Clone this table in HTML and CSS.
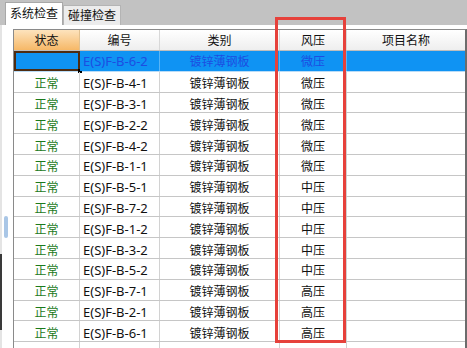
FILE: index.html
```html
<!DOCTYPE html>
<html lang="zh">
<head>
<meta charset="utf-8">
<link rel="stylesheet" href="styles.css">
</head>
<body>
<div class="tabbar">
  <div class="tab active">系统检查</div>
  <div class="tab">碰撞检查</div>
</div>
<div class="panel">
  <div class="grid">
    <div class="row head">
      <div class="cell c hsel">状态</div>
      <div class="cell c">编号</div>
      <div class="cell c">类别</div>
      <div class="cell c">风压</div>
      <div class="cell c">项目名称</div>
    </div>
    <div class="row sel">
      <div class="cell c focus"><span class="corner"></span></div>
      <div class="cell l">E(S)F-B-6-2</div>
      <div class="cell c">镀锌薄钢板</div>
      <div class="cell c">微压</div>
      <div class="cell c"></div>
    </div>
    <div class="row"><div class="cell c ok">正常</div><div class="cell l">E(S)F-B-4-1</div><div class="cell c">镀锌薄钢板</div><div class="cell c">微压</div><div class="cell c"></div></div>
    <div class="row"><div class="cell c ok">正常</div><div class="cell l">E(S)F-B-3-1</div><div class="cell c">镀锌薄钢板</div><div class="cell c">微压</div><div class="cell c"></div></div>
    <div class="row"><div class="cell c ok">正常</div><div class="cell l">E(S)F-B-2-2</div><div class="cell c">镀锌薄钢板</div><div class="cell c">微压</div><div class="cell c"></div></div>
    <div class="row"><div class="cell c ok">正常</div><div class="cell l">E(S)F-B-4-2</div><div class="cell c">镀锌薄钢板</div><div class="cell c">微压</div><div class="cell c"></div></div>
    <div class="row"><div class="cell c ok">正常</div><div class="cell l">E(S)F-B-1-1</div><div class="cell c">镀锌薄钢板</div><div class="cell c">微压</div><div class="cell c"></div></div>
    <div class="row"><div class="cell c ok">正常</div><div class="cell l">E(S)F-B-5-1</div><div class="cell c">镀锌薄钢板</div><div class="cell c">中压</div><div class="cell c"></div></div>
    <div class="row"><div class="cell c ok">正常</div><div class="cell l">E(S)F-B-7-2</div><div class="cell c">镀锌薄钢板</div><div class="cell c">中压</div><div class="cell c"></div></div>
    <div class="row"><div class="cell c ok">正常</div><div class="cell l">E(S)F-B-1-2</div><div class="cell c">镀锌薄钢板</div><div class="cell c">中压</div><div class="cell c"></div></div>
    <div class="row"><div class="cell c ok">正常</div><div class="cell l">E(S)F-B-3-2</div><div class="cell c">镀锌薄钢板</div><div class="cell c">中压</div><div class="cell c"></div></div>
    <div class="row"><div class="cell c ok">正常</div><div class="cell l">E(S)F-B-5-2</div><div class="cell c">镀锌薄钢板</div><div class="cell c">中压</div><div class="cell c"></div></div>
    <div class="row"><div class="cell c ok">正常</div><div class="cell l">E(S)F-B-7-1</div><div class="cell c">镀锌薄钢板</div><div class="cell c">高压</div><div class="cell c"></div></div>
    <div class="row"><div class="cell c ok">正常</div><div class="cell l">E(S)F-B-2-1</div><div class="cell c">镀锌薄钢板</div><div class="cell c">高压</div><div class="cell c"></div></div>
    <div class="row"><div class="cell c ok">正常</div><div class="cell l">E(S)F-B-6-1</div><div class="cell c">镀锌薄钢板</div><div class="cell c">高压</div><div class="cell c"></div></div>
    <div class="row"><div class="cell c"></div><div class="cell l"></div><div class="cell c"></div><div class="cell c"></div><div class="cell c"></div></div>
  </div>
</div>
<div class="splitter"></div>
<div class="edge"></div>
<div class="highlight"></div>
</body>
</html>
```

FILE: styles.css
```css
html, body {
  margin: 0;
  padding: 0;
  background: #ffffff;
  overflow: hidden;
  height: 348px;
}
body {
  font-family: "Noto Sans", "Noto Sans CJK SC", sans-serif;
  font-size: 12px;
  color: #111;
  position: relative;
}
.tabbar {
  height: 25px;
  background: #c2c2c2;
  display: flex;
  align-items: flex-end;
  padding-left: 5px;
  box-sizing: border-box;
}
.tab {
  height: 20px;
  line-height: 19px;
  padding: 0 4px;
  background: #ececec;
  border: 1px solid #b4b4b4;
  border-bottom: none;
  font-size: 12px;
  box-sizing: border-box;
}
.tab.active {
  height: 23px;
  line-height: 21px;
  background: #ffffff;
  border-color: #a8a8a8;
}
.panel {
  padding: 4px 0 0 11px;
  height: 323px;
  border-left: 2px solid #e4e4e4;
  box-sizing: border-box;
}
.grid {
  width: 454px;
  border-left: 1px solid #8a8a8a;
  border-top: 1px solid #8a8a8a;
  border-right: 2px solid #6c6c6c;
  box-sizing: border-box;
}
.row {
  display: grid;
  grid-template-columns: 66px 80px 120px 67px 1fr;
  height: 20.8px;
  box-sizing: border-box;
  border-bottom: 1px solid #c6c6c6;
}
.cell {
  border-right: 1px solid #d2d2d2;
  display: flex;
  align-items: center;
  white-space: nowrap;
  overflow: hidden;
  position: relative;
  padding-top: 3px;
  box-sizing: border-box;
}
.cell:last-child { border-right: none; }
.c { justify-content: center; }
.l { padding-left: 3px; font-size: 13px; }
.ok { color: #1b7a1b; }
.head {
  height: 21px;
  border-bottom: 1px solid #bdbdbd;
}
.head .cell {
  padding-top: 0;
  background: linear-gradient(#ffffff, #eeeeee);
  border-right-color: #d8d8d8;
  color: #111;
}
.head .cell.hsel {
  background: linear-gradient(#fde3bd, #f6b867);
  border-right-color: #e0c090;
}
.sel {
  border-bottom: 1px solid #b9dcf7;
}
.sel .cell {
  padding-top: 1px;
  background: #0f93f3;
  color: #1d4de2;
  border-right-color: #58b4f6;
}
.sel .cell.focus {
  border: 2px solid #4e2c12;
  overflow: visible;
}
.corner {
  position: absolute;
  right: -4px;
  bottom: -4px;
  width: 4px;
  height: 4px;
  background: #000;
}
.splitter {
  position: absolute;
  left: 4px;
  top: 216px;
  width: 4px;
  height: 22px;
  background: #a9c6e6;
  border-radius: 2px;
}
.edge {
  position: absolute;
  left: 0;
  top: 254px;
  width: 2px;
  height: 76px;
  background: #3a3a3a;
}
.highlight {
  position: absolute;
  left: 275px;
  top: 17px;
  width: 71px;
  height: 326px;
  border: 3px solid #e6413b;
  box-sizing: border-box;
}
```
